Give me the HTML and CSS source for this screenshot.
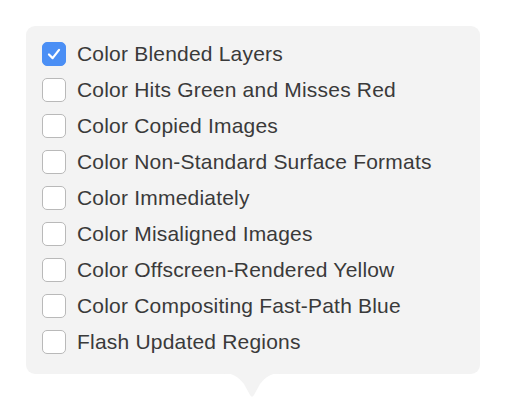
FILE: index.html
```html
<!DOCTYPE html>
<html lang="en">
<head>
  <meta charset="UTF-8">
  <title>Debug Options</title>
  <link rel="stylesheet" href="styles.css">
</head>
<body>
  <!-- Popover with render debug options -->
  <div class="popover">
    <div class="card">
      <ul class="options">
        <li><span class="box checked"><svg viewBox="0 0 24 24" width="24" height="24"><path d="M6.5 12.5 L10.5 16.5 L17.5 7.5" fill="none" stroke="#fff" stroke-width="2.4" stroke-linecap="round" stroke-linejoin="round"/></svg></span>Color Blended Layers</li>
        <li><span class="box"></span>Color Hits Green and Misses Red</li>
        <li><span class="box"></span>Color Copied Images</li>
        <li><span class="box"></span>Color Non-Standard Surface Formats</li>
        <li><span class="box"></span>Color Immediately</li>
        <li><span class="box"></span>Color Misaligned Images</li>
        <li><span class="box"></span>Color Offscreen-Rendered Yellow</li>
        <li><span class="box"></span>Color Compositing Fast-Path Blue</li>
        <li><span class="box"></span>Flash Updated Regions</li>
      </ul>
    </div>
    <!-- little arrow under the card -->
    <svg class="arrow" viewBox="0 0 60 25" width="60" height="25"><path d="M0 0 C12 0 16 4 22 11 L28 22 Q30 25.5 32 22 L38 11 C44 4 48 0 60 0 Z" fill="#f3f3f3"/></svg>
  </div>
</body>
</html>
```

FILE: styles.css
```css
body {
  margin: 0;
  padding: 26px 26px 0 26px;
  background: #fff;
  font-family: 'Liberation Sans', Arial, sans-serif;
}

.popover {
  width: 454px;
  display: flex;
  flex-direction: column;
}

/* Popover card */
.card {
  height: 348px;
  background: #f3f3f3;
  border-radius: 9px;
  box-sizing: border-box;
  padding: 10px 0 0 16px;
}

.options {
  list-style: none;
  margin: 0;
  padding: 0;
}

.options li {
  display: flex;
  align-items: center;
  height: 36px;
  font-size: 21px;
  letter-spacing: 0.2px;
  color: #3a3a3a;
}

.box {
  width: 22px;
  height: 22px;
  border: 1px solid #b9b9b9;
  border-radius: 5px;
  background: #fff;
  margin-right: 11px;
  flex-shrink: 0;
  display: flex;
  align-items: center;
  justify-content: center;
}

.box.checked {
  background: #4b8ff5;
  border-color: #4b8ff5;
}

.box svg {
  width: 22px;
  height: 22px;
}

.arrow {
  display: block;
  margin-top: -1px;
  margin-left: 196px;
  flex-shrink: 0;
}
```
